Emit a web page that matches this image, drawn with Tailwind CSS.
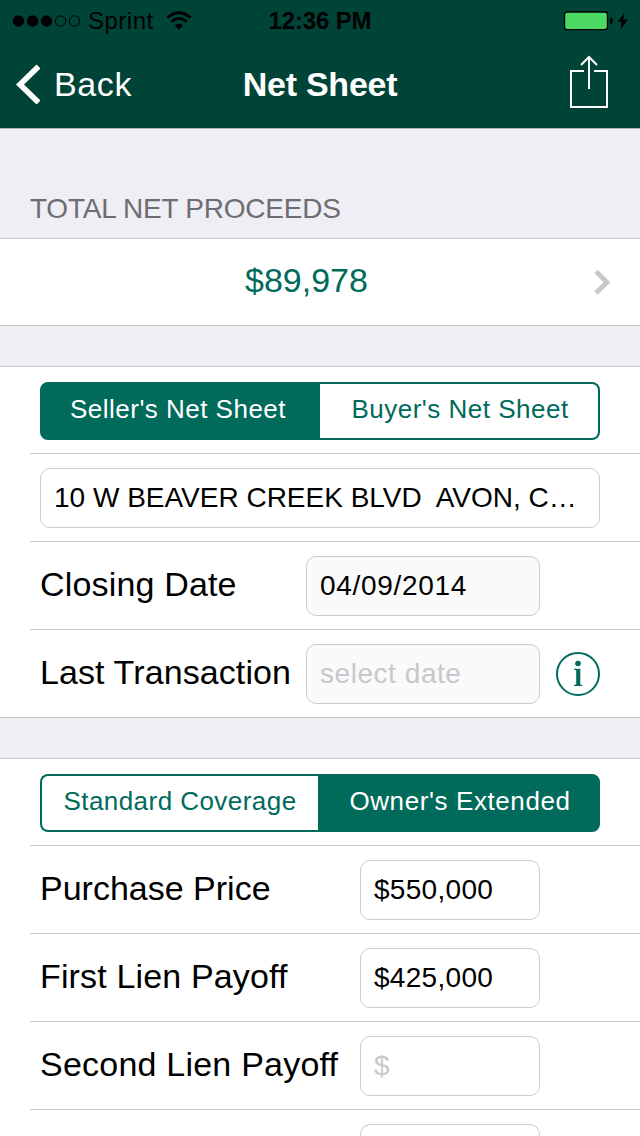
<!DOCTYPE html>
<html lang="en">

<head>
  <meta charset="UTF-8" />
  <meta name="viewport" content="width=device-width, initial-scale=1.0" />
  <script src="https://cdn.jsdelivr.net/npm/@tailwindcss/browser@4"></script>
  <title>Net Sheet</title>
</head>

<body class="h-[1136px] overflow-hidden bg-[#efeef4] font-['Liberation_Sans',Arial,sans-serif] text-black">
  <header class="h-[129px] bg-[#004438] border-b border-[#b2b2b2]">
    <!-- Status bar -->
    <div class="grid grid-cols-3 h-10 items-center text-[24px] leading-10">
      <div class="flex items-center pt-px pl-3">
        <svg class="w-[70px] h-4" viewBox="0 0 70 16">
          <circle cx="6.5" cy="8" r="5.7" />
          <circle cx="20.5" cy="8" r="5.7" />
          <circle cx="34.5" cy="8" r="5.7" />
          <g fill="none" stroke="black">
            <circle cx="48.5" cy="8" r="5.2" />
            <circle cx="62.5" cy="8" r="5.2" />
          </g>
        </svg>
        <span class="ml-[6px] tracking-[0.5px]">Sprint</span>
        <svg class="ml-3 w-[26px] h-[20px]" viewBox="0 0 26 20">
          <path d="M13 18.8 L8.8 14.6 Q13 11 17.2 14.6 Z" />
          <path d="M5.2 10.8 Q13 4 20.8 10.8 M1.4 6.8 Q13 -3.2 24.6 6.8" fill="none" stroke="black" stroke-width="2.8" />
        </svg>
      </div>
      <div class="pt-px text-center font-bold tracking-[-0.15px] whitespace-nowrap">12:36 PM</div>
      <div class="flex items-center justify-end pt-px pr-[11px]">
        <svg class="w-[66px] h-5" viewBox="0 0 66 20">
          <rect x="1.5" y="1" width="43" height="17.6" rx="2.5" fill="#4cd964" stroke="black" stroke-width="1.4" />
          <path d="M47 6.5 Q50 7 50 9.7 Q50 12.5 47 13 Z" />
          <path d="M61.5 1.5 L54.5 11 H58.8 L57.5 18.5 L64.8 8.5 H60.2 Z" />
        </svg>
      </div>
    </div>

    <!-- Navigation bar -->
    <nav class="grid grid-cols-3 h-[88px] items-center text-[34px] text-white">
      <div class="flex items-center pl-4">
        <svg class="w-6 h-10" viewBox="0 0 24 40">
          <path d="M22.5 2.5 L4 20.5 L22.5 38.5" fill="none" stroke="white" stroke-width="5.6" />
        </svg>
        <span class="ml-[14px] tracking-[0.6px]">Back</span>
      </div>
      <h1 class="text-center font-bold tracking-[-0.25px] whitespace-nowrap">Net Sheet</h1>
      <div class="flex justify-end pr-8 pb-1">
        <svg class="w-[38px] h-[54px]" viewBox="0 0 38 54" fill="none" stroke="white" stroke-width="2">
          <path d="M14 16 H1 V52 H37 V16 H24" />
          <path d="M19 34 V2 M11 10 L19 2 L27 10" />
        </svg>
      </div>
    </nav>
  </header>

  <main>
    <h2 class="h-[109px] pt-[64px] pl-[30px] text-[28px] leading-8 tracking-[-0.23px] text-[#6d6d72]">TOTAL NET PROCEEDS</h2>
    <div class="flex h-[88px] items-center justify-between border-y border-[#c8c7cc] bg-white pl-[245px] pr-[30px]">
      <span class="pb-1 text-[34px] text-[#006a5b]">$89,978</span>
      <svg class="w-4 h-[26px]" viewBox="0 0 16 26">
        <path d="M2 2.5 L13 13.3 L2 24" fill="none" stroke="#c7c7cc" stroke-width="4.8" />
      </svg>
    </div>

    <!-- Property -->
    <section class="mt-10 border-y border-[#c8c7cc] bg-white">
      <div class="ml-[30px] h-[87px] border-b border-[#c8c7cc] pt-[15px] pl-[10px]">
        <div class="flex h-[58px] w-[560px] text-center text-[26px] leading-[50px] text-[#006a5b]">
          <div class="w-[280px] rounded-l-[8px] border-2 border-[#006a5b] bg-[#006a5b] pr-1 tracking-[0.48px] text-white">Seller's Net Sheet</div>
          <div class="flex-1 rounded-r-[8px] border-2 border-l-0 border-[#006a5b] pl-0.5 tracking-[0.5px]">Buyer's Net Sheet</div>
        </div>
      </div>
      <div class="ml-[30px] h-[88px] border-b border-[#c8c7cc] pt-[14px] pl-[10px]">
        <div class="h-[60px] w-[560px] rounded-[10px] border border-[#cccccc] pl-[13px] text-[28px] leading-[58px] whitespace-pre">10 W BEAVER CREEK BLVD  AVON, C…</div>
      </div>
      <div class="ml-[30px] flex h-[88px] border-b border-[#c8c7cc] pt-[14px] pl-[10px]">
        <label class="w-[266px] text-[34px] leading-[57px] tracking-[0.17px] whitespace-nowrap">Closing Date</label>
        <div class="h-[60px] w-[234px] rounded-[10px] border border-[#cccccc] bg-[#fafafa] pl-[13px] text-[28px] leading-[58px] tracking-[0.7px]">04/09/2014</div>
      </div>
      <div class="ml-[30px] flex h-[87px] pt-[14px] pl-[10px]">
        <label class="w-[266px] text-[34px] leading-[57px] tracking-[0.1px] whitespace-nowrap">Last Transaction</label>
        <div class="h-[60px] w-[234px] rounded-[10px] border border-[#cccccc] bg-[#fafafa] pl-[13px] text-[28px] leading-[58px] tracking-[0.55px] text-[#c7c7cd]">select date</div>
        <svg class="mt-2 ml-4 size-11" viewBox="0 0 44 44">
          <circle cx="22" cy="22" r="21" fill="none" stroke="#006a5b" stroke-width="2" />
          <circle cx="22" cy="11.5" r="2.8" fill="#006a5b" />
          <path d="M18 16.8 H24.3 V32.6 L26.2 33 V34 H18 V33 L20.2 32.6 V18.2 L18 17.8 Z" fill="#006a5b" />
        </svg>
      </div>
    </section>

    <!-- Amounts -->
    <section class="mt-10 border-t border-[#c8c7cc] bg-white">
      <div class="ml-[30px] h-[87px] border-b border-[#c8c7cc] pt-[15px] pl-[10px]">
        <div class="flex h-[58px] w-[560px] text-center text-[26px] leading-[50px] text-[#006a5b]">
          <div class="w-[278px] rounded-l-[8px] border-2 border-r-0 border-[#006a5b] tracking-[0.45px]">Standard Coverage</div>
          <div class="flex-1 rounded-r-[8px] border-2 border-[#006a5b] bg-[#006a5b] pl-0.5 tracking-[0.6px] text-white">Owner's Extended</div>
        </div>
      </div>
      <div class="ml-[30px] flex h-[88px] border-b border-[#c8c7cc] pt-[14px] pl-[10px]">
        <label class="w-[320px] text-[34px] leading-[57px] whitespace-nowrap">Purchase Price</label>
        <div class="h-[60px] w-[180px] rounded-[10px] border border-[#cccccc] pl-[13px] text-[28px] leading-[58px] tracking-[0.3px]">$550,000</div>
      </div>
      <div class="ml-[30px] flex h-[88px] border-b border-[#c8c7cc] pt-[14px] pl-[10px]">
        <label class="w-[320px] text-[34px] leading-[57px] tracking-[0.15px] whitespace-nowrap">First Lien Payoff</label>
        <div class="h-[60px] w-[180px] rounded-[10px] border border-[#cccccc] pl-[13px] text-[28px] leading-[58px] tracking-[0.3px]">$425,000</div>
      </div>
      <div class="ml-[30px] flex h-[88px] border-b border-[#c8c7cc] pt-[14px] pl-[10px]">
        <label class="w-[320px] text-[34px] leading-[57px] tracking-[0.22px] whitespace-nowrap">Second Lien Payoff</label>
        <div class="h-[60px] w-[180px] rounded-[10px] border border-[#cccccc] pl-[13px] text-[28px] leading-[58px] text-[#c7c7cd]">$</div>
      </div>
      <!-- Next row, cut off by the screen edge -->
      <div class="ml-[30px] flex h-[26px] pt-[14px] pl-[330px]">
        <div class="h-3 w-[180px] rounded-t-[10px] border border-b-0 border-[#cccccc]"></div>
      </div>
    </section>
  </main>
</body>

</html>
